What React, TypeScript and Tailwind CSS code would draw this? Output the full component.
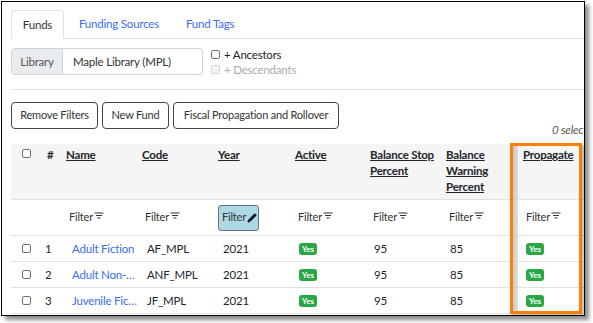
import { Pencil } from "lucide-react";

const font = { fontFamily: 'Lato, "Noto Sans", sans-serif' };

const FilterIcon = () => (
  <svg width="10" height="8" viewBox="0 0 10 8" className="inline-block ml-[1px] -mt-[4px]">
    <path d="M0.5 1h9M2 3.5h6M3.5 6h3" stroke="#333" strokeWidth="1.1" />
  </svg>
);

const Box = ({ disabled = false }: { disabled?: boolean }) => (
  <span
    className={`inline-block w-[9px] h-[9px] rounded-[2px] border ${
      disabled ? "border-gray-300 bg-gray-100" : "border-gray-500 bg-white"
    }`}
  />
);

const Yes = () => (
  <span className="inline-flex items-center justify-center w-[18px] h-[12px] rounded-[3px] bg-[#28a745] text-white text-[8px] font-bold leading-none tracking-normal">
    Yes
  </span>
);

const cols = "grid grid-cols-[29px_22px_76px_76px_76px_76px_76px_76px_76px]";

const rows = [
  { n: "1", name: "Adult Fiction", code: "AF_MPL" },
  { n: "2", name: "Adult Non-Fiction", code: "ANF_MPL" },
  { n: "3", name: "Juvenile Fiction", code: "JF_MPL" },
];

const buttons = [
  { label: "Remove Filters", w: "w-[87px]" },
  { label: "New Fund", w: "w-[67px]" },
  { label: "Fiscal Propagation and Rollover", w: "w-[166px]" },
];

export default function App() {
  return (
    <div className="w-[593px] h-[323px] bg-white overflow-hidden" style={font}>
      <div className="relative ml-[1px] mt-[1px] w-[584px] h-[315px] border border-black overflow-hidden shadow-[4px_4px_4px_rgba(0,0,0,0.45)] bg-white text-[11px] tracking-[-0.2px] text-[#212529]">
        <div className="pl-[9px] pt-[8px] w-[700px]">
          {/* tabs */}
          <div className="flex items-end h-[29px] border-b border-[#dee2e6] text-[11.5px]">
            <div className="h-[29px] w-[53px] flex items-center justify-center border border-[#dee2e6] border-b-white rounded-t-[4px] -mb-[1px] bg-white text-[#333]">
              Funds
            </div>
            <div className="h-[29px] flex items-center ml-[15px] text-[#3b6cf5]">Funding Sources</div>
            <div className="h-[29px] flex items-center ml-[27px] text-[#3b6cf5]">Fund Tags</div>
          </div>

          {/* library selector */}
          <div className="flex mt-[9px] h-[27px] text-[11.5px]">
            <div className="w-[52px] flex items-center justify-center bg-[#e9ecef] border border-[#ced4da] rounded-l-[4px] text-[#555]">
              Library
            </div>
            <div className="w-[140px] flex items-center pl-[10px] border border-l-0 border-[#ced4da] rounded-r-[4px] text-[#333]">
              Maple Library (MPL)
            </div>
            <div className="ml-[8px] flex flex-col leading-[15px] -mt-[1px]">
              <div className="flex items-center gap-[4px]">
                <Box />
                <span>+ Ancestors</span>
              </div>
              <div className="flex items-center gap-[4px] text-[#aaa]">
                <Box disabled />
                <span>+ Descendants</span>
              </div>
            </div>
          </div>

          <div className="mt-[14px] border-t border-[#dee2e6]" />

          {/* buttons */}
          <div className="flex gap-[4px] mt-[12px]">
            {buttons.map((b) => (
              <div
                key={b.label}
                className={`${b.w} h-[27px] flex items-center justify-center border border-[#444] rounded-[4px] text-[#333] whitespace-nowrap`}
              >
                {b.label}
              </div>
            ))}
          </div>
          <div className="h-[15px] -mt-[7px] flex items-center pl-[541px] italic text-[11.5px] text-[#555]">0 selected</div>

          {/* table header */}
          <div className={`${cols} mt-[7px] bg-[#f5f5f5] h-[56px] border-b border-[#dee2e6] font-bold text-[11.5px] leading-[16px] pt-[3px]`}>
            <div className="flex justify-center pt-[2px] pl-[1px]">
              <Box />
            </div>
            <div className="pl-[7px]">#</div>
            <div className="pl-[4px] underline">Name</div>
            <div className="pl-[4px] underline">Code</div>
            <div className="pl-[4px] underline">Year</div>
            <div className="pl-[5px] underline">Active</div>
            <div className="pl-[4px] underline">Balance Stop Percent</div>
            <div className="pl-[4px] underline pr-[8px]">Balance Warning Percent</div>
            <div className="pl-[5px] underline">Propagate</div>
          </div>

          {/* filter row */}
          <div className={`${cols} h-[36px] items-center border-b border-[#dee2e6] text-[#333]`}>
            <div />
            <div />
            {["Name", "Code", "Year", "Active", "Stop", "Warn", "Prop"].map((c) =>
              c === "Year" ? (
                <div key={c} className="pl-[4px]">
                  <div className="w-[41px] h-[26px] flex items-center pl-[3px] bg-[#add8e6] border border-[#6c757d] rounded-[3px]">
                    Filter
                    <Pencil size={10} fill="#111" stroke="#111" strokeWidth={1.5} className="ml-[1px]" />
                  </div>
                </div>
              ) : (
                <div key={c} className={c === "Active" || c === "Prop" ? "pl-[8px]" : "pl-[7px]"}>
                  Filter
                  <FilterIcon />
                </div>
              )
            )}
          </div>

          {/* data rows */}
          {rows.map((r) => (
            <div key={r.n} className={`${cols} h-[26px] items-center border-b border-[#dee2e6] text-[11.5px]`}>
              <div className="flex justify-center pl-[1px]">
                <Box />
              </div>
              <div className="pl-[5px]">{r.n}</div>
              <div className="pl-[10px] pr-[1px] text-[#3b6cf5] truncate">{r.name}</div>
              <div className="pl-[9px]">{r.code}</div>
              <div className="pl-[9px]">2021</div>
              <div className="pl-[9px] flex">
                <Yes />
              </div>
              <div className="pl-[8px]">95</div>
              <div className="pl-[8px]">85</div>
              <div className="pl-[8px] flex">
                <Yes />
              </div>
            </div>
          ))}
        </div>

        {/* highlight annotation */}
        <div className="absolute left-[508px] top-[141px] w-[72px] h-[171px] border-[3px] border-[#ff8000] shadow-[2px_2px_3px_rgba(0,0,0,0.3)]">
          <div className="h-full w-[5px] bg-gradient-to-r from-[#bdbdbd] to-[#d9d9d9] opacity-80" />
        </div>
      </div>
    </div>
  );
}
